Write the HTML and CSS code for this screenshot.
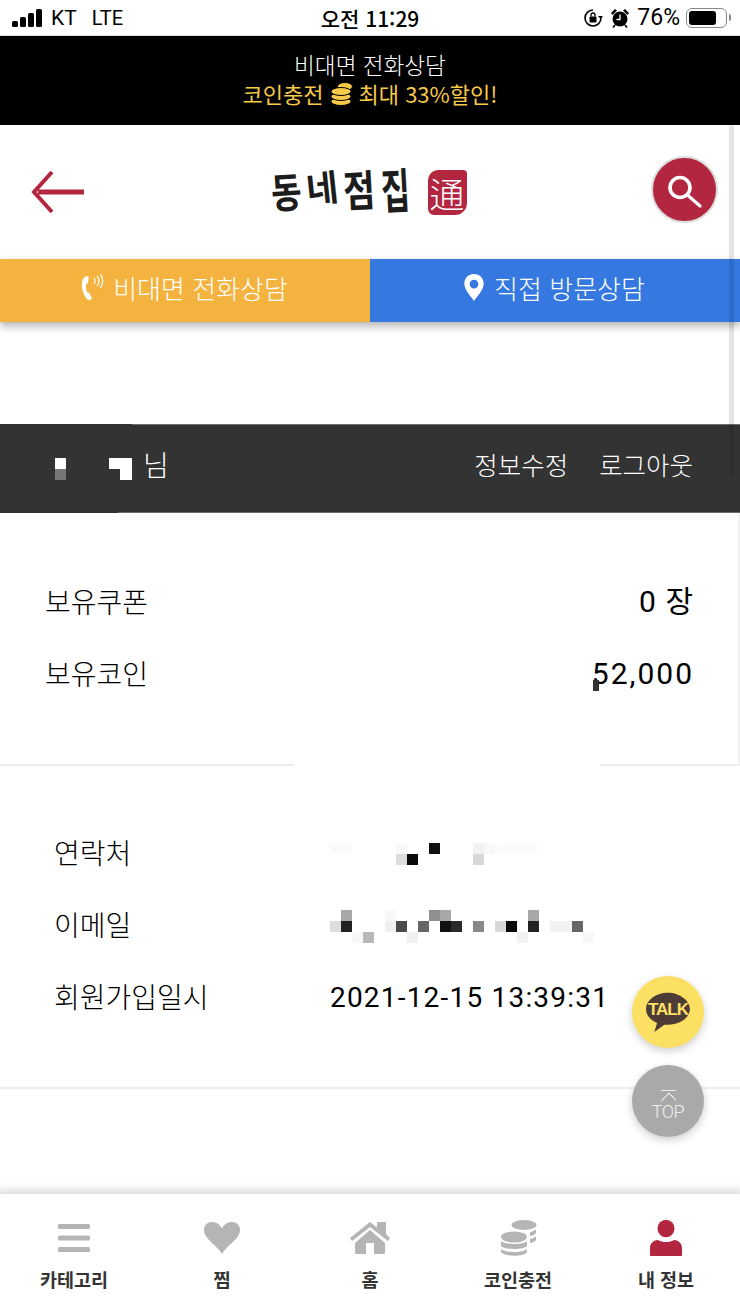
FILE: index.html
```html
<!DOCTYPE html>
<html lang="ko">
<head>
  <meta charset="UTF-8">
  <title>동네점집 - 내 정보</title>
  <link rel="stylesheet" href="styles.css">
</head>
<body>
  <div class="page">
    <div class="status-bar">
      <div class="status-left">
        <svg class="signal" width="32" height="20" viewBox="0 0 32 20"><rect x="0" y="13" width="6" height="6" rx="1.5"/><rect x="8" y="9" width="6" height="10" rx="1.5"/><rect x="16" y="5" width="6" height="14" rx="1.5"/><rect x="24" y="1" width="6" height="18" rx="1.5"/></svg>
        <span>KT</span>
        <span class="lte">LTE</span>
      </div>
      <div class="status-time">오전 11:29</div>
      <div class="status-right">
        <svg width="19" height="20" viewBox="0 0 19 20"><path d="M9 2a8 8 0 1 0 8 8" fill="none" stroke="#000" stroke-width="1.600"/><path d="M14 8h5l-2.500 3z"/><rect x="5.500" y="8.500" width="7" height="6" rx="1"/><path d="M7 8.500V7a2 2 0 0 1 4 0v1.500" fill="none" stroke="#000" stroke-width="1.300"/></svg>
        <svg class="alarm" width="20" height="22" viewBox="0 0 20 22"><circle cx="10" cy="12" r="7.500"/><path d="M10 7.500v5H6.500" fill="none" stroke="#fff" stroke-width="1.300"/><path d="M1 6l4-4 2 1.500L2.500 8zM19 6l-4-4-2 1.500L17.500 8z"/><path d="M5 18l-2 2.500M15 18l2 2.500" stroke="#000" stroke-width="1.800"/></svg>
        <span class="battery-pct">76%</span>
        <div class="battery"><div class="battery-fill"></div></div>
        <div class="battery-cap"></div>
      </div>
    </div>

    <div class="promo">
      <div>비대면 전화상담</div>
      <div class="promo-sub">코인충전
        <svg width="23" height="24" viewBox="0 0 23 24"><g fill="#f7c948" stroke="#000" stroke-width="1"><ellipse cx="15" cy="4.500" rx="7.500" ry="4"/><ellipse cx="11" cy="19.500" rx="10" ry="4"/><ellipse cx="11" cy="14.500" rx="10" ry="4"/><ellipse cx="11" cy="9.500" rx="10" ry="4"/></g></svg>
        최대 33%할인!</div>
    </div>

    <header class="top-header">
      <svg class="back" width="56" height="44" viewBox="0 0 56 44"><path d="M54 22H8" fill="none" stroke="#b3263f" stroke-width="5"/><path d="M22 2 4 22 22 42" fill="none" stroke="#b3263f" stroke-width="4"/></svg>
      <div class="logo">
        <span class="logo-text">
          <span class="logo-c1">동</span><span class="logo-c2">네</span><span class="logo-c3">점</span><span class="logo-c4">집</span>
        </span>
        <span class="logo-seal">通</span>
      </div>
      <div class="search-btn">
        <svg width="36" height="36" viewBox="0 0 36 36"><circle cx="13" cy="15.500" r="10" fill="none" stroke="#fff" stroke-width="3.600"/><path d="M21 23.500 33 34" stroke="#fff" stroke-width="3.200" stroke-linecap="round"/></svg>
      </div>
    </header>

    <div class="consult">
      <a class="consult-btn phone">
        <svg width="24" height="30" viewBox="0 0 26 32"><path d="M8 3c-3 .5-6 3-6 9 0 7 3 15 7 17 1.500.500 3-.5 4-2l-3.500-6.500c-.8.300-1.500.5-2-.5-1-2.500-1.300-5.500-.8-8 .2-.8 1-.8 1.800-.8L9.500 4z" fill="#fff"/><path d="M15 5c1.800 1.500 1.800 5 0 6.500M18.500 3c2.800 3 2.800 8 0 11M22 1c3.500 4 3.500 11 0 15" fill="none" stroke="#fff" stroke-width="1.300"/></svg>
        비대면 전화상담
      </a>
      <a class="consult-btn visit">
        <svg width="22" height="29" viewBox="0 0 22 30"><path fill-rule="evenodd" d="M11 1C5 1 1 5.500 1 11c0 6.500 7 13 10 18 3-5 10-11.500 10-18C21 5.500 17 1 11 1zm0 6a4.500 4.500 0 1 1 0 9 4.500 4.500 0 0 1 0-9z" fill="#fff"/></svg>
        직접 방문상담
      </a>
    </div>

    <div class="user-bar">
      <div class="user-name">
        <svg class="name-mosaic" width="88" height="22" viewBox="0 0 88 22" shape-rendering="crispEdges"><rect x="10" y="0" width="11" height="11" fill="#fff"/><rect x="10" y="11" width="11" height="11" fill="#777"/><rect x="64" y="0" width="23" height="11" fill="#fff"/><rect x="75" y="11" width="12" height="11" fill="#fff"/></svg>
        <span>님</span>
      </div>
      <div class="user-links">
        <a>정보수정</a>
        <a>로그아웃</a>
      </div>
    </div>

    <section class="wallet">
      <div class="wallet-row"><span>보유쿠폰</span><span class="num">0 장</span></div>
      <div class="wallet-row"><span>보유코인</span><span class="num coin">52,000<i class="coin-speck"></i></span></div>
    </section>
    <div class="divider"><span class="divider-left"></span><span class="divider-right"></span></div>

    <section class="info">
      <div class="info-row">
        <span class="info-label">연락처</span>
        <svg class="mosaic" width="275" height="22" viewBox="0 0 275 22" shape-rendering="crispEdges"><rect x="0" y="0" width="22" height="11" fill="#fbfbfb"/><rect x="167" y="0" width="40" height="11" fill="#fbfbfb"/><rect x="66" y="0" width="11" height="11" fill="#f8f8f8"/><rect x="99" y="0" width="11" height="11" fill="#111"/><rect x="143" y="0" width="11" height="11" fill="#f2f2f2"/><rect x="154" y="0" width="11" height="11" fill="#f8f8f8"/><rect x="66" y="11" width="11" height="11" fill="#ddd"/><rect x="77" y="11" width="11" height="11" fill="#0a0a0a"/><rect x="143" y="11" width="11" height="11" fill="#d8d8d8"/></svg>
      </div>
      <div class="info-row">
        <span class="info-label">이메일</span>
        <svg class="mosaic" width="275" height="33" viewBox="0 0 275 33" shape-rendering="crispEdges"><g><rect x="11" y="0" width="11" height="11" fill="#a8a8a8"/><rect x="55" y="0" width="11" height="11" fill="#f8f8f8"/><rect x="99" y="0" width="11" height="11" fill="#909090"/><rect x="110" y="0" width="11" height="11" fill="#a8a8a8"/><rect x="198" y="0" width="11" height="11" fill="#a8a8a8"/></g><g><rect x="0" y="11" width="11" height="11" fill="#ddd"/><rect x="11" y="11" width="11" height="11" fill="#222"/><rect x="55" y="11" width="11" height="11" fill="#f0f0f0"/><rect x="66" y="11" width="11" height="11" fill="#4a4a4a"/><rect x="88" y="11" width="11" height="11" fill="#666"/><rect x="110" y="11" width="11" height="11" fill="#111"/><rect x="121" y="11" width="11" height="11" fill="#2a2a2a"/><rect x="143" y="11" width="11" height="11" fill="#888"/><rect x="165" y="11" width="11" height="11" fill="#d8d8d8"/><rect x="176" y="11" width="11" height="11" fill="#0a0a0a"/><rect x="198" y="11" width="11" height="11" fill="#222"/><rect x="220" y="11" width="22" height="11" fill="#f2f2f2"/><rect x="242" y="11" width="11" height="11" fill="#666"/></g><g><rect x="22" y="22" width="11" height="11" fill="#f8f8f8"/><rect x="33" y="22" width="11" height="11" fill="#b8b8b8"/><rect x="77" y="22" width="11" height="11" fill="#f0f0f0"/><rect x="187" y="22" width="11" height="11" fill="#f2f2f2"/><rect x="253" y="22" width="11" height="11" fill="#f8f8f8"/></g></svg>
      </div>
      <div class="info-row">
        <span class="info-label">회원가입일시</span>
        <span class="info-date">2021-12-15 13:39:31</span>
      </div>
    </section>

    <div class="spacer"></div>

    <nav class="bottom-nav">
      <a class="nav-item">
        <svg width="34" height="44" viewBox="0 0 34 44"><g fill="#b5b5b5"><rect x="1" y="5" width="32" height="5" rx="1.500"/><rect x="1" y="16.500" width="32" height="5" rx="1.500"/><rect x="1" y="28" width="32" height="5" rx="1.500"/></g></svg>
        <span>카테고리</span>
      </a>
      <a class="nav-item">
        <svg width="38" height="44" viewBox="0 0 38 44"><path d="M19 35C14 26 1 20 1 11 1 6 4.500 3 9 3c4.500 0 8 2.500 10 6.500C21 5.500 24.500 3 29 3c4.500 0 8 3 8 8 0 9-13 15-18 24z" fill="#b5b5b5"/></svg>
        <span>찜</span>
      </a>
      <a class="nav-item">
        <svg width="42" height="44" viewBox="0 0 42 44"><path d="M1 19 21 3l7 5.500V3h9v12l4 4-2 3L21 8 3 22z" fill="#b5b5b5"/><path d="M6 24 21 11l15 13v10a1 1 0 0 1-1 1H25V24h-8v11H7a1 1 0 0 1-1-1z" fill="#b5b5b5"/></svg>
        <span>홈</span>
      </a>
      <a class="nav-item">
        <svg width="38" height="44" viewBox="0 0 38 44"><g fill="#b5b5b5"><ellipse cx="25" cy="6" rx="12.500" ry="5"/><path d="M31 13c3-.5 5-1.500 6-3v4c-1 1.500-3 2.500-6 3zM31 20c3-.5 5-1.500 6-3v4c-1 1.500-3 2.500-6 3z"/><ellipse cx="15" cy="18" rx="13" ry="5.500"/><path d="M2 22c3 4 23 4 26 0v5c-3 4-23 4-26 0zM2 30c3 4 23 4 26 0v3c-3 5-23 5-26 0z"/></g></svg>
        <span>코인충전</span>
      </a>
      <a class="nav-item active">
        <svg width="34" height="44" viewBox="0 0 34 44"><g fill="#b3263f"><ellipse cx="17" cy="9.500" rx="8.500" ry="8.700"/><path d="M1 36v-7c0-5 4-8 8-8 2.500 1.500 5 2 8 2s5.500-.5 8-2c4 0 8 3 8 8v7a1 1 0 0 1-1 1H2a1 1 0 0 1-1-1z"/></g></svg>
        <span>내 정보</span>
      </a>
    </nav>

    <div class="float-btn talk">
      <svg width="48" height="42" viewBox="0 0 50 46"><path d="M25 2C12 2 1 10 1 20c0 7 5 12 12 15l-3 10 11-8h4c13 0 24-8 24-17S38 2 25 2z" fill="#4f3b36"/></svg>
      <span class="talk-label">TALK</span>
    </div>
    <div class="float-btn top">
      <span class="top-arrow"></span>
      <span class="top-label">TOP</span>
    </div>
    <div class="scroll-thumb"></div>
  </div>
</body>
</html>
```

FILE: styles.css
```css
* {
  box-sizing: border-box;
}

html, body {
  margin: 0;
  padding: 0;
  background: #fff;
}

a {
  color: inherit;
  text-decoration: none;
}

.page {
  position: relative;
  width: 740px;
  height: 1316px;
  overflow: hidden;
  display: flex;
  flex-direction: column;
  font-family: "Noto Sans CJK KR", "Noto Sans", sans-serif;
  font-weight: 300;
  color: #000;
}

/* status bar */
.status-bar {
  height: 36px;
  padding: 0 9px 0 12px;
  display: flex;
  align-items: center;
  justify-content: space-between;
  position: relative;
  font-family: Roboto, "Noto Sans CJK KR", sans-serif;
  font-size: 21px;
  font-weight: 400;
  border-bottom: 1px solid #ddd;
}

.status-left {
  display: flex;
  align-items: center;
  gap: 7px;
}

.status-left .lte {
  margin-left: 8px;
  font-size: 20px;
}

.status-time {
  position: absolute;
  left: 0;
  right: 0;
  text-align: center;
  font-family: "Noto Sans CJK KR", sans-serif;
  font-size: 21px;
  font-weight: 500;
}

.status-right {
  display: flex;
  align-items: center;
  gap: 7px;
}

.battery-pct {
  font-size: 23px;
  margin-right: -1px;
}

.battery {
  width: 41px;
  height: 20px;
  padding: 2px;
  border: 1.5px solid #888;
  border-radius: 6px;
}

.battery-fill {
  width: 76%;
  height: 100%;
  background: #000;
  border-radius: 3px;
}

.battery-cap {
  width: 2px;
  height: 7px;
  margin-left: -5px;
  background: #888;
  border-radius: 0 2px 2px 0;
}

/* promo banner */
.promo {
  height: 89px;
  background: #000;
  color: #fff;
  font-size: 22.6px;
  line-height: 29px;
  text-align: center;
  padding-top: 14px;
}

.promo-sub {
  color: #f7c948;
  font-weight: 400;
  font-size: 22px;
  display: flex;
  justify-content: center;
  align-items: center;
  gap: 6px;
}

/* header */
.top-header {
  height: 134px;
  padding: 0 22px 0 30px;
  display: flex;
  align-items: center;
  justify-content: space-between;
}

.back {
  margin-top: -1px;
}

.logo {
  display: flex;
  align-items: center;
  gap: 11px;
  width: 196px;
  margin-top: -5px;
}

.logo-text {
  display: flex;
  width: 146px;
  font-size: 33px;
  font-weight: 700;
  color: #1c1c1c;
  line-height: 48px;
}

.logo-text span {
  display: inline-block;
  width: 36.5px;
}

.logo-c1 {
  transform: rotate(-4deg) scale(1, 1.25);
}

.logo-c2 {
  transform: translateY(-4px) rotate(-6deg) scale(1.05, 1.1);
}

.logo-c3 {
  transform: translateY(-2px) rotate(-3deg) scale(1.05, 1.3);
}

.logo-c4 {
  transform: translateY(-2px) rotate(-3deg) scale(0.95, 1.45);
}

.logo-seal {
  width: 39px;
  height: 45px;
  margin-top: 5px;
  border-radius: 10px 4px 12px 6px;
  background: #b3263f;
  color: #fff;
  font-size: 35px;
  font-weight: 300;
  line-height: 45px;
  text-align: center;
}

.search-btn {
  width: 67px;
  height: 67px;
  margin-top: -5px;
  border-radius: 50%;
  border: 2px solid #ddd;
  background: #b3263f;
  display: flex;
  align-items: center;
  justify-content: center;
}

/* consult buttons */
.consult {
  height: 63px;
  display: flex;
  box-shadow: 0 4px 8px rgba(0, 0, 0, 0.3);
  position: relative;
}

.consult-btn {
  flex: 1;
  display: flex;
  align-items: center;
  justify-content: center;
  gap: 9px;
  padding-bottom: 6px;
  padding-right: 2px;
  color: #fff;
  font-size: 26px;
}

.consult-btn.phone {
  background: #f4b23f;
}

.consult-btn.visit {
  background: #3579e0;
}

/* user bar */
.user-bar {
  position: relative;
  height: 89px;
  margin-top: 102px;
  padding: 0 47px 10px 45px;
  background: #333;
  color: #fff;
  display: flex;
  align-items: center;
  justify-content: space-between;
  font-size: 25.500px;
}

.user-bar::before,
.user-bar::after {
  content: "";
  position: absolute;
  right: 0;
  height: 1px;
  background: #6e6e6e;
}

.user-bar::before {
  left: 132px;
  top: 0;
}

.user-bar::after {
  left: 118px;
  bottom: 0;
}

.user-name {
  display: flex;
  align-items: center;
  gap: 10px;
  font-size: 28px;
}

.name-mosaic {
  margin-top: 10px;
}

.user-links {
  display: flex;
  gap: 31px;
}

/* wallet */
.wallet {
  height: 251px;
  padding: 52px 44px 0 45px;
  font-size: 28px;
  border-right: 2px solid #f2f2f2;
}

.wallet-row {
  height: 72px;
  display: flex;
  align-items: center;
  justify-content: space-between;
}

.num {
  position: relative;
  top: -2px;
  font-family: Roboto, "Noto Sans CJK KR", sans-serif;
  font-size: 30px;
  font-weight: 400;
  letter-spacing: 1px;
}

.num.coin {
  top: 0;
  letter-spacing: 2px;
}

.coin-speck {
  position: absolute;
  left: 1px;
  top: 24px;
  width: 6px;
  height: 11px;
  background: #333;
}

.divider {
  height: 2px;
  display: flex;
  justify-content: space-between;
}

.divider-left {
  width: 294px;
  background: #eee;
}

.divider-right {
  width: 140px;
  background: #eee;
}

/* info */
.info {
  height: 323px;
  padding: 50px 0 0 54px;
  font-size: 28px;
  border-bottom: 2px solid #eee;
}

.info-row {
  height: 72px;
  display: flex;
  align-items: center;
}

.info-label {
  width: 276px;
}

.mosaic {
  margin-top: 4px;
}

.info-date {
  position: relative;
  top: 1px;
  font-family: Roboto, sans-serif;
  font-size: 28px;
  font-weight: 400;
  letter-spacing: 1.200px;
}

.spacer {
  flex: 1;
}

/* bottom nav */
.bottom-nav {
  height: 122px;
  margin: 0 -4px;
  padding: 0 4px;
  background: #fff;
  box-shadow: 0 -2px 10px rgba(0, 0, 0, 0.2);
  display: grid;
  grid-template-columns: repeat(5, 1fr);
}

.nav-item {
  display: flex;
  flex-direction: column;
  align-items: center;
  gap: 3px;
  padding-top: 25px;
  font-size: 18.500px;
  font-weight: 700;
  color: #333;
}

/* floating */
.float-btn {
  position: absolute;
  left: 632px;
  width: 72px;
  height: 72px;
  border-radius: 50%;
  display: flex;
  flex-direction: column;
  align-items: center;
  justify-content: center;
  box-shadow: 0 3px 8px rgba(0, 0, 0, 0.2);
}

.float-btn.talk {
  top: 976px;
  background: #fbe063;
}

.talk-label {
  position: absolute;
  top: 24px;
  font-family: "Liberation Sans", sans-serif;
  font-size: 17px;
  font-weight: 700;
  letter-spacing: -1px;
  color: #fbe063;
}

.float-btn.top {
  top: 1065px;
  padding-top: 9px;
  background: #a9a9a9;
  color: #f0f0f0;
}

.top-arrow {
  width: 15px;
  height: 13px;
  border-top: 1.500px solid #f0f0f0;
  position: relative;
  overflow: hidden;
}

.top-arrow::after {
  content: "";
  position: absolute;
  left: 2px;
  top: 4px;
  width: 11px;
  height: 11px;
  border-left: 1.500px solid #f0f0f0;
  border-top: 1.500px solid #f0f0f0;
  transform: rotate(45deg);
}

.top-label {
  font-family: Roboto, sans-serif;
  font-size: 18px;
  font-weight: 300;
  line-height: 18px;
  letter-spacing: -0.500px;
}

.scroll-thumb {
  position: absolute;
  left: 729px;
  top: 125px;
  width: 5px;
  height: 350px;
  background: rgba(0, 0, 0, 0.1);
  border-radius: 3px;
}
```
